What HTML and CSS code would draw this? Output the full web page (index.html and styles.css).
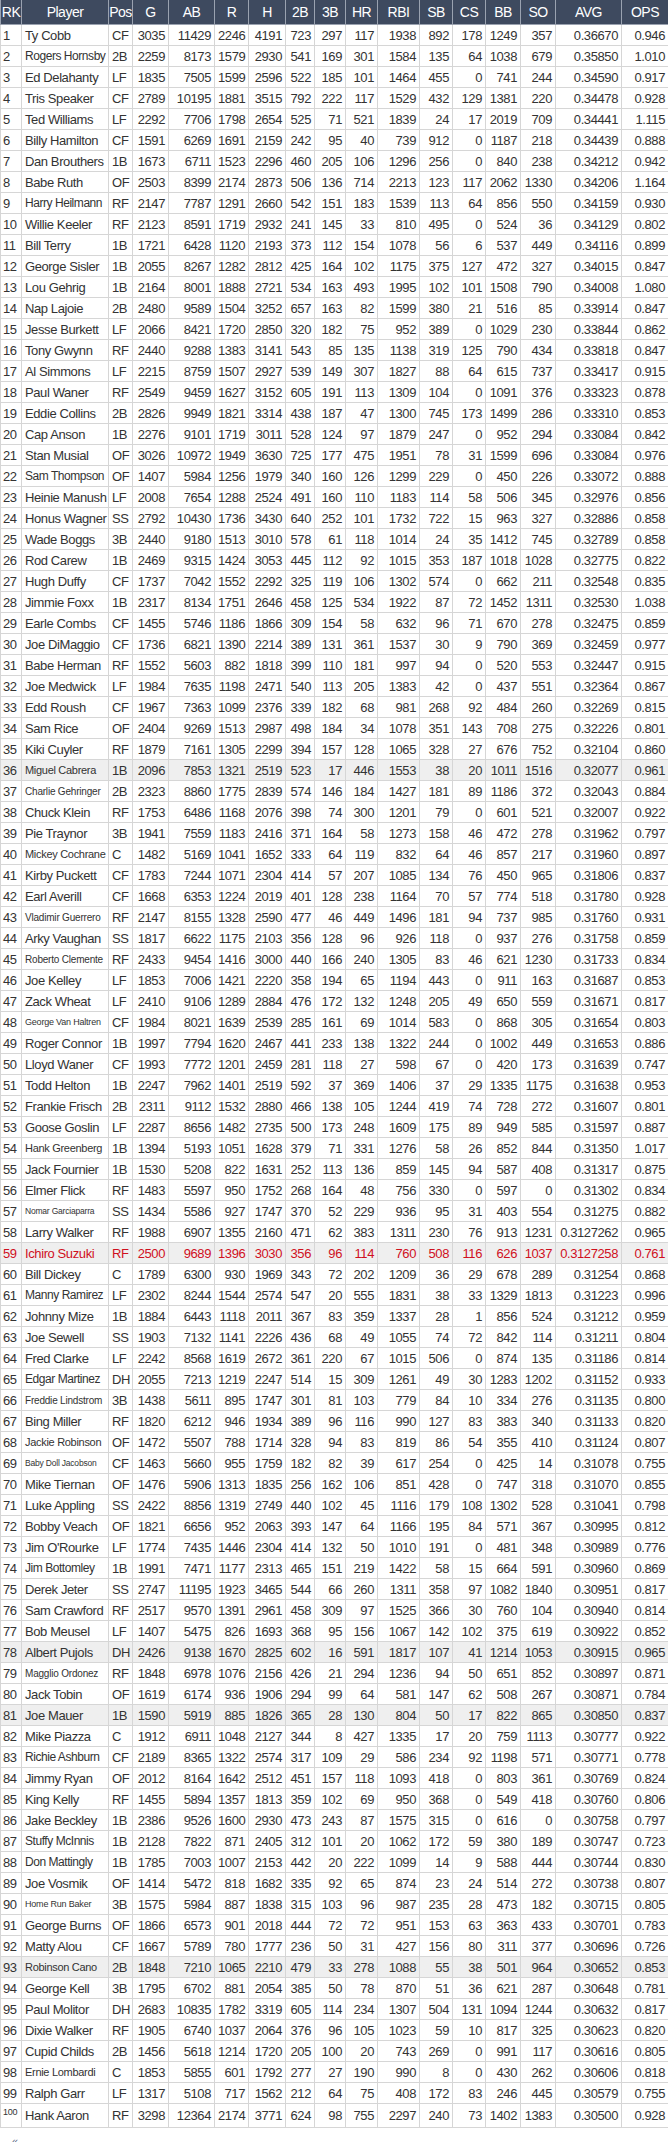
FILE: index.html
```html
<!DOCTYPE html>
<html lang="en">
<head>
<meta charset="utf-8">
<title>Career Batting Average Leaders</title>
<link rel="stylesheet" href="styles.css">
</head>
<body>
<table class="stats">
<colgroup>
<col class="c-rk"><col class="c-player"><col class="c-pos"><col class="c-g"><col class="c-ab"><col class="c-r"><col class="c-h"><col class="c-2b"><col class="c-3b"><col class="c-hr"><col class="c-rbi"><col class="c-sb"><col class="c-cs"><col class="c-bb"><col class="c-so"><col class="c-avg"><col class="c-ops">
</colgroup>
<thead>
<tr><th>RK</th><th>Player</th><th>Pos</th><th>G</th><th>AB</th><th>R</th><th>H</th><th>2B</th><th>3B</th><th>HR</th><th>RBI</th><th>SB</th><th>CS</th><th>BB</th><th>SO</th><th>AVG</th><th>OPS</th></tr>
</thead>
<tbody>
<tr><td>1</td><td>Ty Cobb</td><td>CF</td><td>3035</td><td>11429</td><td>2246</td><td>4191</td><td>723</td><td>297</td><td>117</td><td>1938</td><td>892</td><td>178</td><td>1249</td><td>357</td><td>0.36670</td><td>0.946</td></tr>
<tr><td>2</td><td class="fs12">Rogers Hornsby</td><td>2B</td><td>2259</td><td>8173</td><td>1579</td><td>2930</td><td>541</td><td>169</td><td>301</td><td>1584</td><td>135</td><td>64</td><td>1038</td><td>679</td><td>0.35850</td><td>1.010</td></tr>
<tr><td>3</td><td>Ed Delahanty</td><td>LF</td><td>1835</td><td>7505</td><td>1599</td><td>2596</td><td>522</td><td>185</td><td>101</td><td>1464</td><td>455</td><td>0</td><td>741</td><td>244</td><td>0.34590</td><td>0.917</td></tr>
<tr><td>4</td><td>Tris Speaker</td><td>CF</td><td>2789</td><td>10195</td><td>1881</td><td>3515</td><td>792</td><td>222</td><td>117</td><td>1529</td><td>432</td><td>129</td><td>1381</td><td>220</td><td>0.34478</td><td>0.928</td></tr>
<tr><td>5</td><td>Ted Williams</td><td>LF</td><td>2292</td><td>7706</td><td>1798</td><td>2654</td><td>525</td><td>71</td><td>521</td><td>1839</td><td>24</td><td>17</td><td>2019</td><td>709</td><td>0.34441</td><td>1.115</td></tr>
<tr><td>6</td><td>Billy Hamilton</td><td>CF</td><td>1591</td><td>6269</td><td>1691</td><td>2159</td><td>242</td><td>95</td><td>40</td><td>739</td><td>912</td><td>0</td><td>1187</td><td>218</td><td>0.34439</td><td>0.888</td></tr>
<tr><td>7</td><td>Dan Brouthers</td><td>1B</td><td>1673</td><td>6711</td><td>1523</td><td>2296</td><td>460</td><td>205</td><td>106</td><td>1296</td><td>256</td><td>0</td><td>840</td><td>238</td><td>0.34212</td><td>0.942</td></tr>
<tr><td>8</td><td>Babe Ruth</td><td>OF</td><td>2503</td><td>8399</td><td>2174</td><td>2873</td><td>506</td><td>136</td><td>714</td><td>2213</td><td>123</td><td>117</td><td>2062</td><td>1330</td><td>0.34206</td><td>1.164</td></tr>
<tr><td>9</td><td class="fs12">Harry Heilmann</td><td>RF</td><td>2147</td><td>7787</td><td>1291</td><td>2660</td><td>542</td><td>151</td><td>183</td><td>1539</td><td>113</td><td>64</td><td>856</td><td>550</td><td>0.34159</td><td>0.930</td></tr>
<tr><td>10</td><td>Willie Keeler</td><td>RF</td><td>2123</td><td>8591</td><td>1719</td><td>2932</td><td>241</td><td>145</td><td>33</td><td>810</td><td>495</td><td>0</td><td>524</td><td>36</td><td>0.34129</td><td>0.802</td></tr>
<tr><td>11</td><td>Bill Terry</td><td>1B</td><td>1721</td><td>6428</td><td>1120</td><td>2193</td><td>373</td><td>112</td><td>154</td><td>1078</td><td>56</td><td>6</td><td>537</td><td>449</td><td>0.34116</td><td>0.899</td></tr>
<tr><td>12</td><td>George Sisler</td><td>1B</td><td>2055</td><td>8267</td><td>1282</td><td>2812</td><td>425</td><td>164</td><td>102</td><td>1175</td><td>375</td><td>127</td><td>472</td><td>327</td><td>0.34015</td><td>0.847</td></tr>
<tr><td>13</td><td>Lou Gehrig</td><td>1B</td><td>2164</td><td>8001</td><td>1888</td><td>2721</td><td>534</td><td>163</td><td>493</td><td>1995</td><td>102</td><td>101</td><td>1508</td><td>790</td><td>0.34008</td><td>1.080</td></tr>
<tr><td>14</td><td>Nap Lajoie</td><td>2B</td><td>2480</td><td>9589</td><td>1504</td><td>3252</td><td>657</td><td>163</td><td>82</td><td>1599</td><td>380</td><td>21</td><td>516</td><td>85</td><td>0.33914</td><td>0.847</td></tr>
<tr><td>15</td><td>Jesse Burkett</td><td>LF</td><td>2066</td><td>8421</td><td>1720</td><td>2850</td><td>320</td><td>182</td><td>75</td><td>952</td><td>389</td><td>0</td><td>1029</td><td>230</td><td>0.33844</td><td>0.862</td></tr>
<tr><td>16</td><td>Tony Gwynn</td><td>RF</td><td>2440</td><td>9288</td><td>1383</td><td>3141</td><td>543</td><td>85</td><td>135</td><td>1138</td><td>319</td><td>125</td><td>790</td><td>434</td><td>0.33818</td><td>0.847</td></tr>
<tr><td>17</td><td>Al Simmons</td><td>LF</td><td>2215</td><td>8759</td><td>1507</td><td>2927</td><td>539</td><td>149</td><td>307</td><td>1827</td><td>88</td><td>64</td><td>615</td><td>737</td><td>0.33417</td><td>0.915</td></tr>
<tr><td>18</td><td>Paul Waner</td><td>RF</td><td>2549</td><td>9459</td><td>1627</td><td>3152</td><td>605</td><td>191</td><td>113</td><td>1309</td><td>104</td><td>0</td><td>1091</td><td>376</td><td>0.33323</td><td>0.878</td></tr>
<tr><td>19</td><td>Eddie Collins</td><td>2B</td><td>2826</td><td>9949</td><td>1821</td><td>3314</td><td>438</td><td>187</td><td>47</td><td>1300</td><td>745</td><td>173</td><td>1499</td><td>286</td><td>0.33310</td><td>0.853</td></tr>
<tr><td>20</td><td>Cap Anson</td><td>1B</td><td>2276</td><td>9101</td><td>1719</td><td>3011</td><td>528</td><td>124</td><td>97</td><td>1879</td><td>247</td><td>0</td><td>952</td><td>294</td><td>0.33084</td><td>0.842</td></tr>
<tr><td>21</td><td>Stan Musial</td><td>OF</td><td>3026</td><td>10972</td><td>1949</td><td>3630</td><td>725</td><td>177</td><td>475</td><td>1951</td><td>78</td><td>31</td><td>1599</td><td>696</td><td>0.33084</td><td>0.976</td></tr>
<tr><td>22</td><td class="fs12">Sam Thompson</td><td>OF</td><td>1407</td><td>5984</td><td>1256</td><td>1979</td><td>340</td><td>160</td><td>126</td><td>1299</td><td>229</td><td>0</td><td>450</td><td>226</td><td>0.33072</td><td>0.888</td></tr>
<tr><td>23</td><td>Heinie Manush</td><td>LF</td><td>2008</td><td>7654</td><td>1288</td><td>2524</td><td>491</td><td>160</td><td>110</td><td>1183</td><td>114</td><td>58</td><td>506</td><td>345</td><td>0.32976</td><td>0.856</td></tr>
<tr><td>24</td><td>Honus Wagner</td><td>SS</td><td>2792</td><td>10430</td><td>1736</td><td>3430</td><td>640</td><td>252</td><td>101</td><td>1732</td><td>722</td><td>15</td><td>963</td><td>327</td><td>0.32886</td><td>0.858</td></tr>
<tr><td>25</td><td>Wade Boggs</td><td>3B</td><td>2440</td><td>9180</td><td>1513</td><td>3010</td><td>578</td><td>61</td><td>118</td><td>1014</td><td>24</td><td>35</td><td>1412</td><td>745</td><td>0.32789</td><td>0.858</td></tr>
<tr><td>26</td><td>Rod Carew</td><td>1B</td><td>2469</td><td>9315</td><td>1424</td><td>3053</td><td>445</td><td>112</td><td>92</td><td>1015</td><td>353</td><td>187</td><td>1018</td><td>1028</td><td>0.32775</td><td>0.822</td></tr>
<tr><td>27</td><td>Hugh Duffy</td><td>CF</td><td>1737</td><td>7042</td><td>1552</td><td>2292</td><td>325</td><td>119</td><td>106</td><td>1302</td><td>574</td><td>0</td><td>662</td><td>211</td><td>0.32548</td><td>0.835</td></tr>
<tr><td>28</td><td>Jimmie Foxx</td><td>1B</td><td>2317</td><td>8134</td><td>1751</td><td>2646</td><td>458</td><td>125</td><td>534</td><td>1922</td><td>87</td><td>72</td><td>1452</td><td>1311</td><td>0.32530</td><td>1.038</td></tr>
<tr><td>29</td><td>Earle Combs</td><td>CF</td><td>1455</td><td>5746</td><td>1186</td><td>1866</td><td>309</td><td>154</td><td>58</td><td>632</td><td>96</td><td>71</td><td>670</td><td>278</td><td>0.32475</td><td>0.859</td></tr>
<tr><td>30</td><td>Joe DiMaggio</td><td>CF</td><td>1736</td><td>6821</td><td>1390</td><td>2214</td><td>389</td><td>131</td><td>361</td><td>1537</td><td>30</td><td>9</td><td>790</td><td>369</td><td>0.32459</td><td>0.977</td></tr>
<tr><td>31</td><td>Babe Herman</td><td>RF</td><td>1552</td><td>5603</td><td>882</td><td>1818</td><td>399</td><td>110</td><td>181</td><td>997</td><td>94</td><td>0</td><td>520</td><td>553</td><td>0.32447</td><td>0.915</td></tr>
<tr><td>32</td><td>Joe Medwick</td><td>LF</td><td>1984</td><td>7635</td><td>1198</td><td>2471</td><td>540</td><td>113</td><td>205</td><td>1383</td><td>42</td><td>0</td><td>437</td><td>551</td><td>0.32364</td><td>0.867</td></tr>
<tr><td>33</td><td>Edd Roush</td><td>CF</td><td>1967</td><td>7363</td><td>1099</td><td>2376</td><td>339</td><td>182</td><td>68</td><td>981</td><td>268</td><td>92</td><td>484</td><td>260</td><td>0.32269</td><td>0.815</td></tr>
<tr><td>34</td><td>Sam Rice</td><td>OF</td><td>2404</td><td>9269</td><td>1513</td><td>2987</td><td>498</td><td>184</td><td>34</td><td>1078</td><td>351</td><td>143</td><td>708</td><td>275</td><td>0.32226</td><td>0.801</td></tr>
<tr><td>35</td><td>Kiki Cuyler</td><td>RF</td><td>1879</td><td>7161</td><td>1305</td><td>2299</td><td>394</td><td>157</td><td>128</td><td>1065</td><td>328</td><td>27</td><td>676</td><td>752</td><td>0.32104</td><td>0.860</td></tr>
<tr class="active"><td>36</td><td class="fs11">Miguel Cabrera</td><td>1B</td><td>2096</td><td>7853</td><td>1321</td><td>2519</td><td>523</td><td>17</td><td>446</td><td>1553</td><td>38</td><td>20</td><td>1011</td><td>1516</td><td>0.32077</td><td>0.961</td></tr>
<tr><td>37</td><td class="fs10">Charlie Gehringer</td><td>2B</td><td>2323</td><td>8860</td><td>1775</td><td>2839</td><td>574</td><td>146</td><td>184</td><td>1427</td><td>181</td><td>89</td><td>1186</td><td>372</td><td>0.32043</td><td>0.884</td></tr>
<tr><td>38</td><td>Chuck Klein</td><td>RF</td><td>1753</td><td>6486</td><td>1168</td><td>2076</td><td>398</td><td>74</td><td>300</td><td>1201</td><td>79</td><td>0</td><td>601</td><td>521</td><td>0.32007</td><td>0.922</td></tr>
<tr><td>39</td><td>Pie Traynor</td><td>3B</td><td>1941</td><td>7559</td><td>1183</td><td>2416</td><td>371</td><td>164</td><td>58</td><td>1273</td><td>158</td><td>46</td><td>472</td><td>278</td><td>0.31962</td><td>0.797</td></tr>
<tr><td>40</td><td class="fs11">Mickey Cochrane</td><td>C</td><td>1482</td><td>5169</td><td>1041</td><td>1652</td><td>333</td><td>64</td><td>119</td><td>832</td><td>64</td><td>46</td><td>857</td><td>217</td><td>0.31960</td><td>0.897</td></tr>
<tr><td>41</td><td>Kirby Puckett</td><td>CF</td><td>1783</td><td>7244</td><td>1071</td><td>2304</td><td>414</td><td>57</td><td>207</td><td>1085</td><td>134</td><td>76</td><td>450</td><td>965</td><td>0.31806</td><td>0.837</td></tr>
<tr><td>42</td><td>Earl Averill</td><td>CF</td><td>1668</td><td>6353</td><td>1224</td><td>2019</td><td>401</td><td>128</td><td>238</td><td>1164</td><td>70</td><td>57</td><td>774</td><td>518</td><td>0.31780</td><td>0.928</td></tr>
<tr><td>43</td><td class="fs10">Vladimir Guerrero</td><td>RF</td><td>2147</td><td>8155</td><td>1328</td><td>2590</td><td>477</td><td>46</td><td>449</td><td>1496</td><td>181</td><td>94</td><td>737</td><td>985</td><td>0.31760</td><td>0.931</td></tr>
<tr><td>44</td><td>Arky Vaughan</td><td>SS</td><td>1817</td><td>6622</td><td>1175</td><td>2103</td><td>356</td><td>128</td><td>96</td><td>926</td><td>118</td><td>0</td><td>937</td><td>276</td><td>0.31758</td><td>0.859</td></tr>
<tr><td>45</td><td class="fs10">Roberto Clemente</td><td>RF</td><td>2433</td><td>9454</td><td>1416</td><td>3000</td><td>440</td><td>166</td><td>240</td><td>1305</td><td>83</td><td>46</td><td>621</td><td>1230</td><td>0.31733</td><td>0.834</td></tr>
<tr><td>46</td><td>Joe Kelley</td><td>LF</td><td>1853</td><td>7006</td><td>1421</td><td>2220</td><td>358</td><td>194</td><td>65</td><td>1194</td><td>443</td><td>0</td><td>911</td><td>163</td><td>0.31687</td><td>0.853</td></tr>
<tr><td>47</td><td>Zack Wheat</td><td>LF</td><td>2410</td><td>9106</td><td>1289</td><td>2884</td><td>476</td><td>172</td><td>132</td><td>1248</td><td>205</td><td>49</td><td>650</td><td>559</td><td>0.31671</td><td>0.817</td></tr>
<tr><td>48</td><td class="fs9">George Van Haltren</td><td>CF</td><td>1984</td><td>8021</td><td>1639</td><td>2539</td><td>285</td><td>161</td><td>69</td><td>1014</td><td>583</td><td>0</td><td>868</td><td>305</td><td>0.31654</td><td>0.803</td></tr>
<tr><td>49</td><td>Roger Connor</td><td>1B</td><td>1997</td><td>7794</td><td>1620</td><td>2467</td><td>441</td><td>233</td><td>138</td><td>1322</td><td>244</td><td>0</td><td>1002</td><td>449</td><td>0.31653</td><td>0.886</td></tr>
<tr><td>50</td><td>Lloyd Waner</td><td>CF</td><td>1993</td><td>7772</td><td>1201</td><td>2459</td><td>281</td><td>118</td><td>27</td><td>598</td><td>67</td><td>0</td><td>420</td><td>173</td><td>0.31639</td><td>0.747</td></tr>
<tr><td>51</td><td>Todd Helton</td><td>1B</td><td>2247</td><td>7962</td><td>1401</td><td>2519</td><td>592</td><td>37</td><td>369</td><td>1406</td><td>37</td><td>29</td><td>1335</td><td>1175</td><td>0.31638</td><td>0.953</td></tr>
<tr><td>52</td><td>Frankie Frisch</td><td>2B</td><td>2311</td><td>9112</td><td>1532</td><td>2880</td><td>466</td><td>138</td><td>105</td><td>1244</td><td>419</td><td>74</td><td>728</td><td>272</td><td>0.31607</td><td>0.801</td></tr>
<tr><td>53</td><td>Goose Goslin</td><td>LF</td><td>2287</td><td>8656</td><td>1482</td><td>2735</td><td>500</td><td>173</td><td>248</td><td>1609</td><td>175</td><td>89</td><td>949</td><td>585</td><td>0.31597</td><td>0.887</td></tr>
<tr><td>54</td><td class="fs11">Hank Greenberg</td><td>1B</td><td>1394</td><td>5193</td><td>1051</td><td>1628</td><td>379</td><td>71</td><td>331</td><td>1276</td><td>58</td><td>26</td><td>852</td><td>844</td><td>0.31350</td><td>1.017</td></tr>
<tr><td>55</td><td>Jack Fournier</td><td>1B</td><td>1530</td><td>5208</td><td>822</td><td>1631</td><td>252</td><td>113</td><td>136</td><td>859</td><td>145</td><td>94</td><td>587</td><td>408</td><td>0.31317</td><td>0.875</td></tr>
<tr><td>56</td><td>Elmer Flick</td><td>RF</td><td>1483</td><td>5597</td><td>950</td><td>1752</td><td>268</td><td>164</td><td>48</td><td>756</td><td>330</td><td>0</td><td>597</td><td>0</td><td>0.31302</td><td>0.834</td></tr>
<tr><td>57</td><td class="fs8">Nomar Garciaparra</td><td>SS</td><td>1434</td><td>5586</td><td>927</td><td>1747</td><td>370</td><td>52</td><td>229</td><td>936</td><td>95</td><td>31</td><td>403</td><td>554</td><td>0.31275</td><td>0.882</td></tr>
<tr><td>58</td><td>Larry Walker</td><td>RF</td><td>1988</td><td>6907</td><td>1355</td><td>2160</td><td>471</td><td>62</td><td>383</td><td>1311</td><td>230</td><td>76</td><td>913</td><td>1231</td><td>0.3127262</td><td>0.965</td></tr>
<tr class="active hl"><td>59</td><td>Ichiro Suzuki</td><td>RF</td><td>2500</td><td>9689</td><td>1396</td><td>3030</td><td>356</td><td>96</td><td>114</td><td>760</td><td>508</td><td>116</td><td>626</td><td>1037</td><td>0.3127258</td><td>0.761</td></tr>
<tr><td>60</td><td>Bill Dickey</td><td>C</td><td>1789</td><td>6300</td><td>930</td><td>1969</td><td>343</td><td>72</td><td>202</td><td>1209</td><td>36</td><td>29</td><td>678</td><td>289</td><td>0.31254</td><td>0.868</td></tr>
<tr><td>61</td><td class="fs12">Manny Ramirez</td><td>LF</td><td>2302</td><td>8244</td><td>1544</td><td>2574</td><td>547</td><td>20</td><td>555</td><td>1831</td><td>38</td><td>33</td><td>1329</td><td>1813</td><td>0.31223</td><td>0.996</td></tr>
<tr><td>62</td><td>Johnny Mize</td><td>1B</td><td>1884</td><td>6443</td><td>1118</td><td>2011</td><td>367</td><td>83</td><td>359</td><td>1337</td><td>28</td><td>1</td><td>856</td><td>524</td><td>0.31212</td><td>0.959</td></tr>
<tr><td>63</td><td>Joe Sewell</td><td>SS</td><td>1903</td><td>7132</td><td>1141</td><td>2226</td><td>436</td><td>68</td><td>49</td><td>1055</td><td>74</td><td>72</td><td>842</td><td>114</td><td>0.31211</td><td>0.804</td></tr>
<tr><td>64</td><td>Fred Clarke</td><td>LF</td><td>2242</td><td>8568</td><td>1619</td><td>2672</td><td>361</td><td>220</td><td>67</td><td>1015</td><td>506</td><td>0</td><td>874</td><td>135</td><td>0.31186</td><td>0.814</td></tr>
<tr><td>65</td><td class="fs12">Edgar Martinez</td><td>DH</td><td>2055</td><td>7213</td><td>1219</td><td>2247</td><td>514</td><td>15</td><td>309</td><td>1261</td><td>49</td><td>30</td><td>1283</td><td>1202</td><td>0.31152</td><td>0.933</td></tr>
<tr><td>66</td><td class="fs10">Freddie Lindstrom</td><td>3B</td><td>1438</td><td>5611</td><td>895</td><td>1747</td><td>301</td><td>81</td><td>103</td><td>779</td><td>84</td><td>10</td><td>334</td><td>276</td><td>0.31135</td><td>0.800</td></tr>
<tr><td>67</td><td>Bing Miller</td><td>RF</td><td>1820</td><td>6212</td><td>946</td><td>1934</td><td>389</td><td>96</td><td>116</td><td>990</td><td>127</td><td>83</td><td>383</td><td>340</td><td>0.31133</td><td>0.820</td></tr>
<tr><td>68</td><td class="fs11">Jackie Robinson</td><td>OF</td><td>1472</td><td>5507</td><td>788</td><td>1714</td><td>328</td><td>94</td><td>83</td><td>819</td><td>86</td><td>54</td><td>355</td><td>410</td><td>0.31124</td><td>0.807</td></tr>
<tr><td>69</td><td class="fs8">Baby Doll Jacobson</td><td>CF</td><td>1463</td><td>5660</td><td>955</td><td>1759</td><td>182</td><td>82</td><td>39</td><td>617</td><td>254</td><td>0</td><td>425</td><td>14</td><td>0.31078</td><td>0.755</td></tr>
<tr><td>70</td><td>Mike Tiernan</td><td>OF</td><td>1476</td><td>5906</td><td>1313</td><td>1835</td><td>256</td><td>162</td><td>106</td><td>851</td><td>428</td><td>0</td><td>747</td><td>318</td><td>0.31070</td><td>0.855</td></tr>
<tr><td>71</td><td>Luke Appling</td><td>SS</td><td>2422</td><td>8856</td><td>1319</td><td>2749</td><td>440</td><td>102</td><td>45</td><td>1116</td><td>179</td><td>108</td><td>1302</td><td>528</td><td>0.31041</td><td>0.798</td></tr>
<tr><td>72</td><td>Bobby Veach</td><td>OF</td><td>1821</td><td>6656</td><td>952</td><td>2063</td><td>393</td><td>147</td><td>64</td><td>1166</td><td>195</td><td>84</td><td>571</td><td>367</td><td>0.30995</td><td>0.812</td></tr>
<tr><td>73</td><td>Jim O'Rourke</td><td>LF</td><td>1774</td><td>7435</td><td>1446</td><td>2304</td><td>414</td><td>132</td><td>50</td><td>1010</td><td>191</td><td>0</td><td>481</td><td>348</td><td>0.30989</td><td>0.776</td></tr>
<tr><td>74</td><td class="fs12">Jim Bottomley</td><td>1B</td><td>1991</td><td>7471</td><td>1177</td><td>2313</td><td>465</td><td>151</td><td>219</td><td>1422</td><td>58</td><td>15</td><td>664</td><td>591</td><td>0.30960</td><td>0.869</td></tr>
<tr><td>75</td><td>Derek Jeter</td><td>SS</td><td>2747</td><td>11195</td><td>1923</td><td>3465</td><td>544</td><td>66</td><td>260</td><td>1311</td><td>358</td><td>97</td><td>1082</td><td>1840</td><td>0.30951</td><td>0.817</td></tr>
<tr><td>76</td><td>Sam Crawford</td><td>RF</td><td>2517</td><td>9570</td><td>1391</td><td>2961</td><td>458</td><td>309</td><td>97</td><td>1525</td><td>366</td><td>30</td><td>760</td><td>104</td><td>0.30940</td><td>0.814</td></tr>
<tr><td>77</td><td>Bob Meusel</td><td>LF</td><td>1407</td><td>5475</td><td>826</td><td>1693</td><td>368</td><td>95</td><td>156</td><td>1067</td><td>142</td><td>102</td><td>375</td><td>619</td><td>0.30922</td><td>0.852</td></tr>
<tr class="active"><td>78</td><td>Albert Pujols</td><td>DH</td><td>2426</td><td>9138</td><td>1670</td><td>2825</td><td>602</td><td>16</td><td>591</td><td>1817</td><td>107</td><td>41</td><td>1214</td><td>1053</td><td>0.30915</td><td>0.965</td></tr>
<tr><td>79</td><td class="fs10">Magglio Ordonez</td><td>RF</td><td>1848</td><td>6978</td><td>1076</td><td>2156</td><td>426</td><td>21</td><td>294</td><td>1236</td><td>94</td><td>50</td><td>651</td><td>852</td><td>0.30897</td><td>0.871</td></tr>
<tr><td>80</td><td>Jack Tobin</td><td>OF</td><td>1619</td><td>6174</td><td>936</td><td>1906</td><td>294</td><td>99</td><td>64</td><td>581</td><td>147</td><td>62</td><td>508</td><td>267</td><td>0.30871</td><td>0.784</td></tr>
<tr class="active"><td>81</td><td>Joe Mauer</td><td>1B</td><td>1590</td><td>5919</td><td>885</td><td>1826</td><td>365</td><td>28</td><td>130</td><td>804</td><td>50</td><td>17</td><td>822</td><td>865</td><td>0.30850</td><td>0.837</td></tr>
<tr><td>82</td><td>Mike Piazza</td><td>C</td><td>1912</td><td>6911</td><td>1048</td><td>2127</td><td>344</td><td>8</td><td>427</td><td>1335</td><td>17</td><td>20</td><td>759</td><td>1113</td><td>0.30777</td><td>0.922</td></tr>
<tr><td>83</td><td class="fs12">Richie Ashburn</td><td>CF</td><td>2189</td><td>8365</td><td>1322</td><td>2574</td><td>317</td><td>109</td><td>29</td><td>586</td><td>234</td><td>92</td><td>1198</td><td>571</td><td>0.30771</td><td>0.778</td></tr>
<tr><td>84</td><td>Jimmy Ryan</td><td>OF</td><td>2012</td><td>8164</td><td>1642</td><td>2512</td><td>451</td><td>157</td><td>118</td><td>1093</td><td>418</td><td>0</td><td>803</td><td>361</td><td>0.30769</td><td>0.824</td></tr>
<tr><td>85</td><td>King Kelly</td><td>RF</td><td>1455</td><td>5894</td><td>1357</td><td>1813</td><td>359</td><td>102</td><td>69</td><td>950</td><td>368</td><td>0</td><td>549</td><td>418</td><td>0.30760</td><td>0.806</td></tr>
<tr><td>86</td><td>Jake Beckley</td><td>1B</td><td>2386</td><td>9526</td><td>1600</td><td>2930</td><td>473</td><td>243</td><td>87</td><td>1575</td><td>315</td><td>0</td><td>616</td><td>0</td><td>0.30758</td><td>0.797</td></tr>
<tr><td>87</td><td class="fs12">Stuffy McInnis</td><td>1B</td><td>2128</td><td>7822</td><td>871</td><td>2405</td><td>312</td><td>101</td><td>20</td><td>1062</td><td>172</td><td>59</td><td>380</td><td>189</td><td>0.30747</td><td>0.723</td></tr>
<tr><td>88</td><td class="fs12">Don Mattingly</td><td>1B</td><td>1785</td><td>7003</td><td>1007</td><td>2153</td><td>442</td><td>20</td><td>222</td><td>1099</td><td>14</td><td>9</td><td>588</td><td>444</td><td>0.30744</td><td>0.830</td></tr>
<tr><td>89</td><td>Joe Vosmik</td><td>OF</td><td>1414</td><td>5472</td><td>818</td><td>1682</td><td>335</td><td>92</td><td>65</td><td>874</td><td>23</td><td>24</td><td>514</td><td>272</td><td>0.30738</td><td>0.807</td></tr>
<tr><td>90</td><td class="fs9">Home Run Baker</td><td>3B</td><td>1575</td><td>5984</td><td>887</td><td>1838</td><td>315</td><td>103</td><td>96</td><td>987</td><td>235</td><td>28</td><td>473</td><td>182</td><td>0.30715</td><td>0.805</td></tr>
<tr><td>91</td><td>George Burns</td><td>OF</td><td>1866</td><td>6573</td><td>901</td><td>2018</td><td>444</td><td>72</td><td>72</td><td>951</td><td>153</td><td>63</td><td>363</td><td>433</td><td>0.30701</td><td>0.783</td></tr>
<tr><td>92</td><td>Matty Alou</td><td>CF</td><td>1667</td><td>5789</td><td>780</td><td>1777</td><td>236</td><td>50</td><td>31</td><td>427</td><td>156</td><td>80</td><td>311</td><td>377</td><td>0.30696</td><td>0.726</td></tr>
<tr class="active"><td>93</td><td class="fs11">Robinson Cano</td><td>2B</td><td>1848</td><td>7210</td><td>1065</td><td>2210</td><td>479</td><td>33</td><td>278</td><td>1088</td><td>55</td><td>38</td><td>501</td><td>964</td><td>0.30652</td><td>0.853</td></tr>
<tr><td>94</td><td>George Kell</td><td>3B</td><td>1795</td><td>6702</td><td>881</td><td>2054</td><td>385</td><td>50</td><td>78</td><td>870</td><td>51</td><td>36</td><td>621</td><td>287</td><td>0.30648</td><td>0.781</td></tr>
<tr><td>95</td><td>Paul Molitor</td><td>DH</td><td>2683</td><td>10835</td><td>1782</td><td>3319</td><td>605</td><td>114</td><td>234</td><td>1307</td><td>504</td><td>131</td><td>1094</td><td>1244</td><td>0.30632</td><td>0.817</td></tr>
<tr><td>96</td><td>Dixie Walker</td><td>RF</td><td>1905</td><td>6740</td><td>1037</td><td>2064</td><td>376</td><td>96</td><td>105</td><td>1023</td><td>59</td><td>10</td><td>817</td><td>325</td><td>0.30623</td><td>0.820</td></tr>
<tr><td>97</td><td>Cupid Childs</td><td>2B</td><td>1456</td><td>5618</td><td>1214</td><td>1720</td><td>205</td><td>100</td><td>20</td><td>743</td><td>269</td><td>0</td><td>991</td><td>117</td><td>0.30616</td><td>0.805</td></tr>
<tr><td>98</td><td class="fs11">Ernie Lombardi</td><td>C</td><td>1853</td><td>5855</td><td>601</td><td>1792</td><td>277</td><td>27</td><td>190</td><td>990</td><td>8</td><td>0</td><td>430</td><td>262</td><td>0.30606</td><td>0.818</td></tr>
<tr><td>99</td><td>Ralph Garr</td><td>LF</td><td>1317</td><td>5108</td><td>717</td><td>1562</td><td>212</td><td>64</td><td>75</td><td>408</td><td>172</td><td>83</td><td>246</td><td>445</td><td>0.30579</td><td>0.755</td></tr>
<tr><td class="rk-small">100</td><td>Hank Aaron</td><td>RF</td><td>3298</td><td>12364</td><td>2174</td><td>3771</td><td>624</td><td>98</td><td>755</td><td>2297</td><td>240</td><td>73</td><td>1402</td><td>1383</td><td>0.30500</td><td>0.928</td></tr>
</tbody>
</table>
<nav class="pager"><a class="pager-prev" href="#">«</a></nav>
</body>
</html>
```

FILE: styles.css
```css
html, body {
  margin: 0;
  padding: 0;
  background: #ffffff;
}

body {
  font-family: "Liberation Sans", Arial, sans-serif;
  color: #333333;
}

.stats {
  width: 668px;
  table-layout: fixed;
  border-collapse: collapse;
  font-size: 13px;
  letter-spacing: -0.4px;
}

.c-rk { width: 21px; }
.c-player { width: 87px; }
.c-pos { width: 24px; }
.c-g { width: 36px; }
.c-ab { width: 46px; }
.c-r { width: 34px; }
.c-h { width: 37px; }
.c-2b { width: 29px; }
.c-3b { width: 31px; }
.c-hr { width: 32px; }
.c-rbi { width: 42px; }
.c-sb { width: 33px; }
.c-cs { width: 33px; }
.c-bb { width: 35px; }
.c-so { width: 35px; }
.c-avg { width: 66px; }
.c-ops { width: 47px; }

.stats th {
  height: 24px;
  padding: 0;
  background: #3e4a5f;
  color: #ffffff;
  font-weight: normal;
  font-size: 14px;
  letter-spacing: -0.5px;
  text-align: center;
  border: 1px solid #9aa2b0;
  border-top: none;
  white-space: nowrap;
}

.stats td {
  height: 20px;
  padding: 0 3px;
  border: 1px solid #d6d6d6;
  white-space: nowrap;
  overflow: hidden;
  text-align: right;
}

.stats td:nth-child(1),
.stats td:nth-child(2),
.stats td:nth-child(3) {
  text-align: left;
}

.stats td:nth-child(1) {
  padding-left: 2px;
  padding-right: 0;
}

.stats td:nth-child(2) {
  padding-left: 3px;
  padding-right: 0;
}

.stats td.fs12 { font-size: 12px; letter-spacing: -0.45px; }
.stats td.fs11 { font-size: 11px; letter-spacing: -0.3px; }
.stats td.fs10 { font-size: 10px; letter-spacing: -0.2px; }
.stats td.fs9 { font-size: 9px; letter-spacing: -0.2px; }
.stats td.fs8 { font-size: 8.5px; letter-spacing: -0.2px; }
.stats td.rk-small { font-size: 9px; letter-spacing: -0.3px; vertical-align: top; padding-top: 3px; }

.stats tr.active td {
  background: #efefef;
}

.stats tr.hl td {
  color: #d0101e;
}

.pager {
  padding: 8px 0 0 12px;
  font-size: 11px;
  line-height: 11px;
}

.pager-prev {
  color: #4a5a7a;
  text-decoration: none;
}
```
